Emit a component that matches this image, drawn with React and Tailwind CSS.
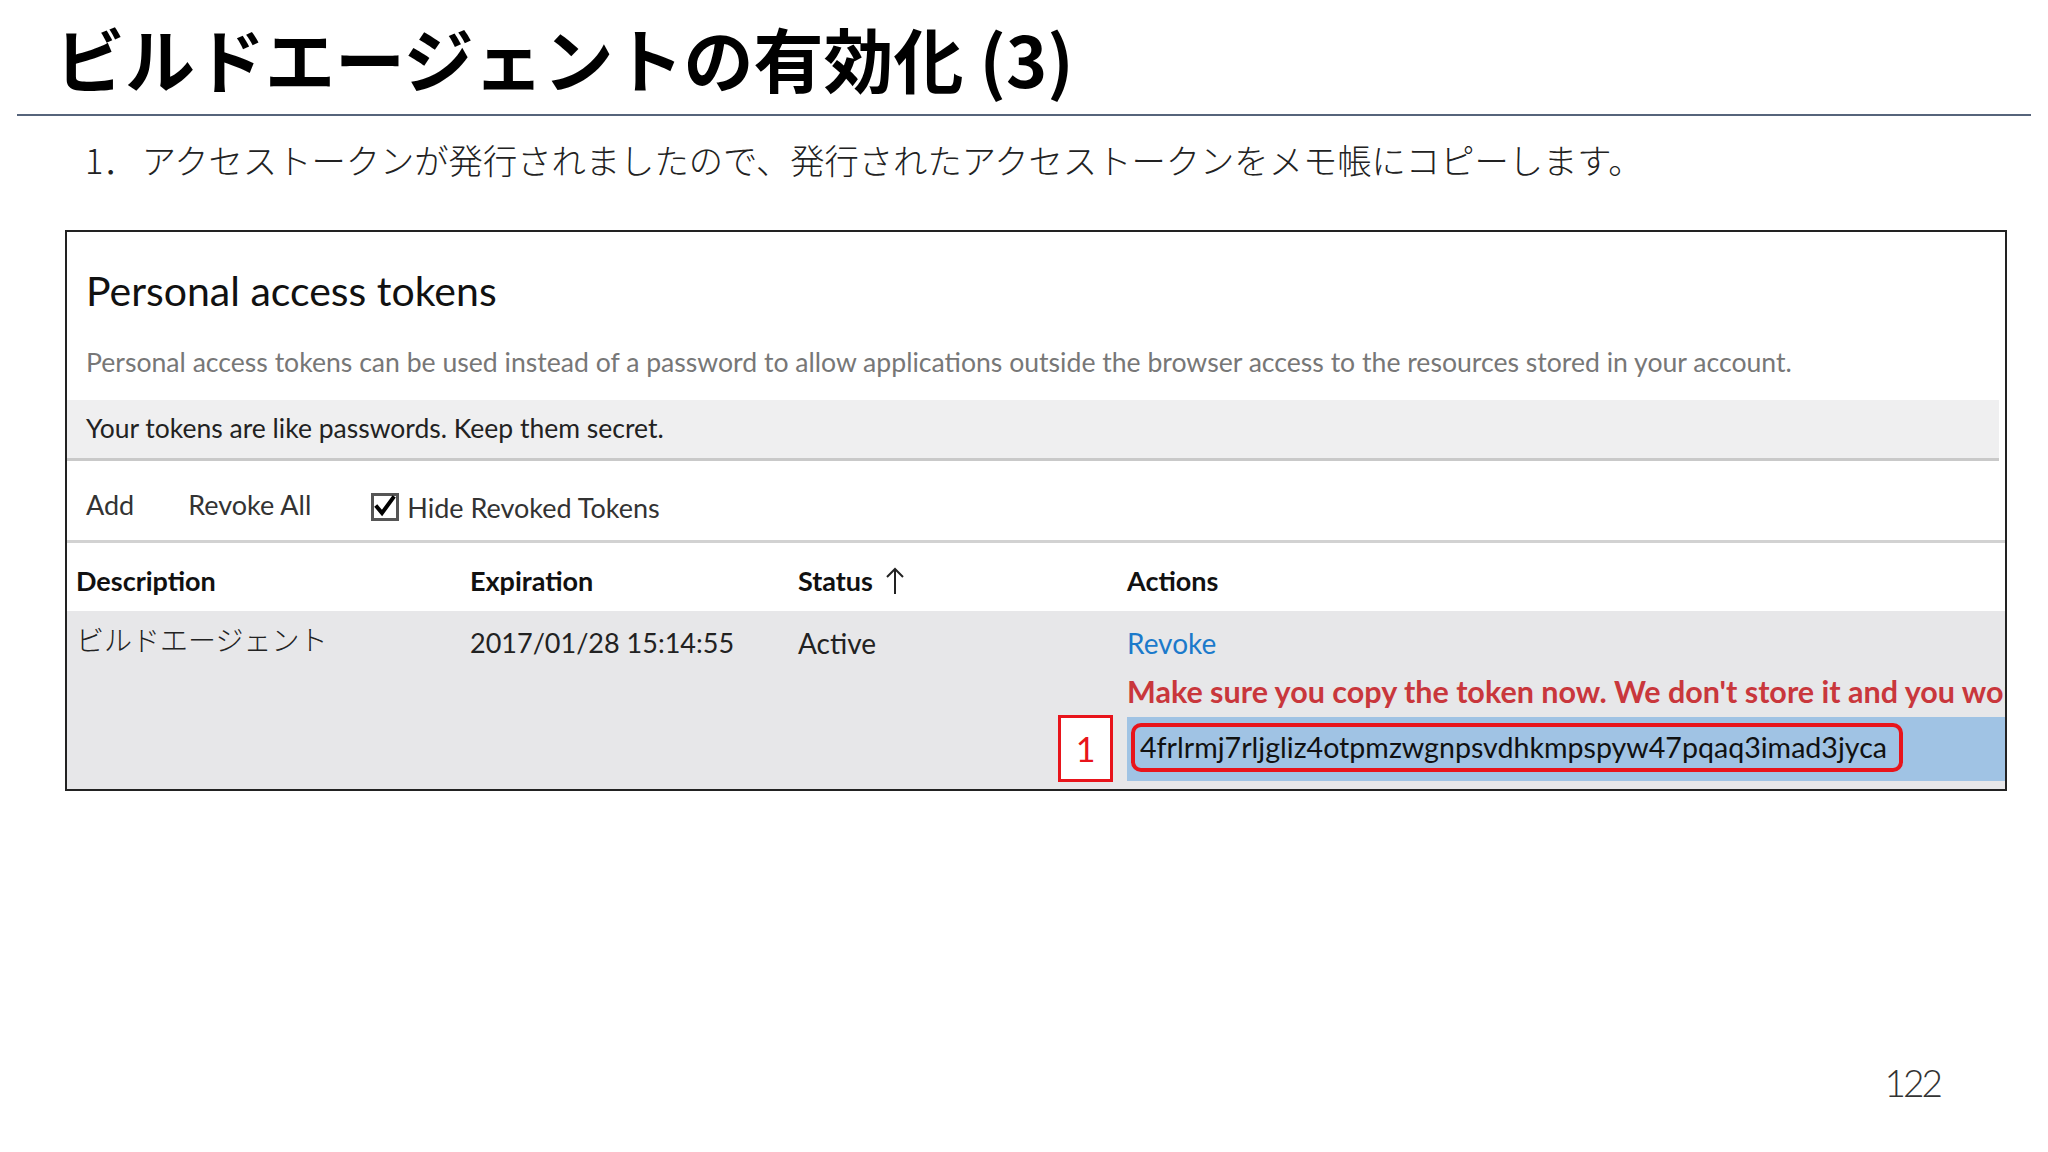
import React from 'react';

const jp = { fontFamily: '"Noto Sans CJK JP", "Noto Sans", sans-serif' };
const ui = { fontFamily: 'Lato, "Noto Sans CJK JP", sans-serif' };

const CheckBox = () => (
  <svg width="28" height="28" viewBox="0 0 28 28" className="shrink-0">
    <rect x="1.5" y="1.5" width="25" height="25" fill="white" stroke="#555" strokeWidth="3" />
    <path d="M6 14 L11 20 L22 5" fill="none" stroke="#000" strokeWidth="4" strokeLinecap="square" />
  </svg>
);

const UpArrow = () => (
  <svg width="20" height="28" viewBox="0 0 20 28" className="ml-[12px]">
    <path d="M10 27 V2 M2 10 L10 2 L18 10" fill="none" stroke="#222" strokeWidth="2" />
  </svg>
);

export default function App() {
  return (
    <div className="w-[2048px] h-[1152px] bg-white flex flex-col overflow-hidden">
      <h1 className="pl-[55px] pt-[22px] text-[70px] leading-[72px] font-bold text-black" style={jp}>
        ビルドエージェントの有効化 (3)
      </h1>
      <div className="mx-[17px] mt-[20px] h-[2px] bg-[#56647b]" />

      <p className="pl-[85px] mt-[22px] text-[34.3px] leading-[42px] font-light text-[#222]" style={jp}>
        1．<span className="ml-[4px]">アクセストークンが発行されましたので、発行されたアクセストークンをメモ帳にコピーします。</span>
      </p>

      <div className="ml-[65px] mt-[50px] w-[1942px] h-[561px] border-2 border-[#222] flex flex-col overflow-hidden" style={ui}>
        <div className="pl-[19px] pt-[35px] text-[41px] leading-[48px] text-[#111]">Personal access tokens</div>
        <div className="pl-[19px] mt-[29px] text-[26.6px] leading-[36px] text-[#777]">
          Personal access tokens can be used instead of a password to allow applications outside the browser access to the resources stored in your account.
        </div>

        <div className="mt-[20px] mr-[6px] h-[61px] bg-[#efeff0] border-b-[3px] border-[#c9c9c9] pl-[19px] flex items-center text-[26.5px] text-[#222]">
          Your tokens are like passwords. Keep them secret.
        </div>

        <div className="h-[82px] pt-[10px] border-b-[3px] border-[#d2d2d2] pl-[19px] flex items-center text-[27px] text-[#333]">
          <span>Add</span>
          <span className="ml-[54px]">Revoke All</span>
          <span className="ml-[60px] flex items-center mt-[2px]">
            <CheckBox />
            <span className="ml-[8px] mt-[4px]">Hide Revoked Tokens</span>
          </span>
        </div>

        <div className="grid grid-cols-[394px_328px_329px_1fr] pl-[9px] pt-[8px] h-[68px] items-center text-[27px] font-bold text-[#111]">
          <div>Description</div>
          <div>Expiration</div>
          <div className="flex items-center">Status<UpArrow /></div>
          <div>Actions</div>
        </div>

        <div className="flex-1 bg-[#e7e7e9] grid grid-cols-[394px_328px_329px_1fr] pl-[9px] text-[28px] text-[#222]">
          <div className="pt-[10px] leading-[36px] font-light" style={jp}>ビルドエージェント</div>
          <div className="pt-[14px] leading-[36px] text-[27px]">2017/01/28 15:14:55</div>
          <div className="pt-[14px] leading-[36px]">Active</div>
          <div className="pt-[14px] flex flex-col min-w-0">
            <div className="leading-[36px] text-[#1b7acb]">Revoke</div>
            <div className="mt-[12px] leading-[36px] text-[30.5px] font-bold text-[#c9373c] whitespace-nowrap overflow-hidden">
              Make sure you copy the token now. We don't store it and you won't be able to see it again.
            </div>
            <div className="relative mt-[8px] h-[64px] bg-[#a0c3e4]">
              <div className="absolute left-[-69px] top-[-2px] w-[55px] h-[67px] bg-white border-[3px] border-[#e8141b] flex items-center justify-center text-[34px] text-[#e8141b]">
                1
              </div>
              <div className="ml-[4px] mt-[6px] w-[772px] h-[49px] border-[4px] border-[#e8141b] rounded-[10px] flex items-center pl-[5px] text-[28.6px] text-[#111]">
                4frlrmj7rljgliz4otpmzwgnpsvdhkmpspyw47pqaq3imad3jyca
              </div>
            </div>
          </div>
        </div>
      </div>

      <div className="mt-auto mb-[42px] pr-[108px] text-right text-[37px] tracking-[-3px] font-light text-[#333]" style={ui}>
        122
      </div>
    </div>
  );
}
